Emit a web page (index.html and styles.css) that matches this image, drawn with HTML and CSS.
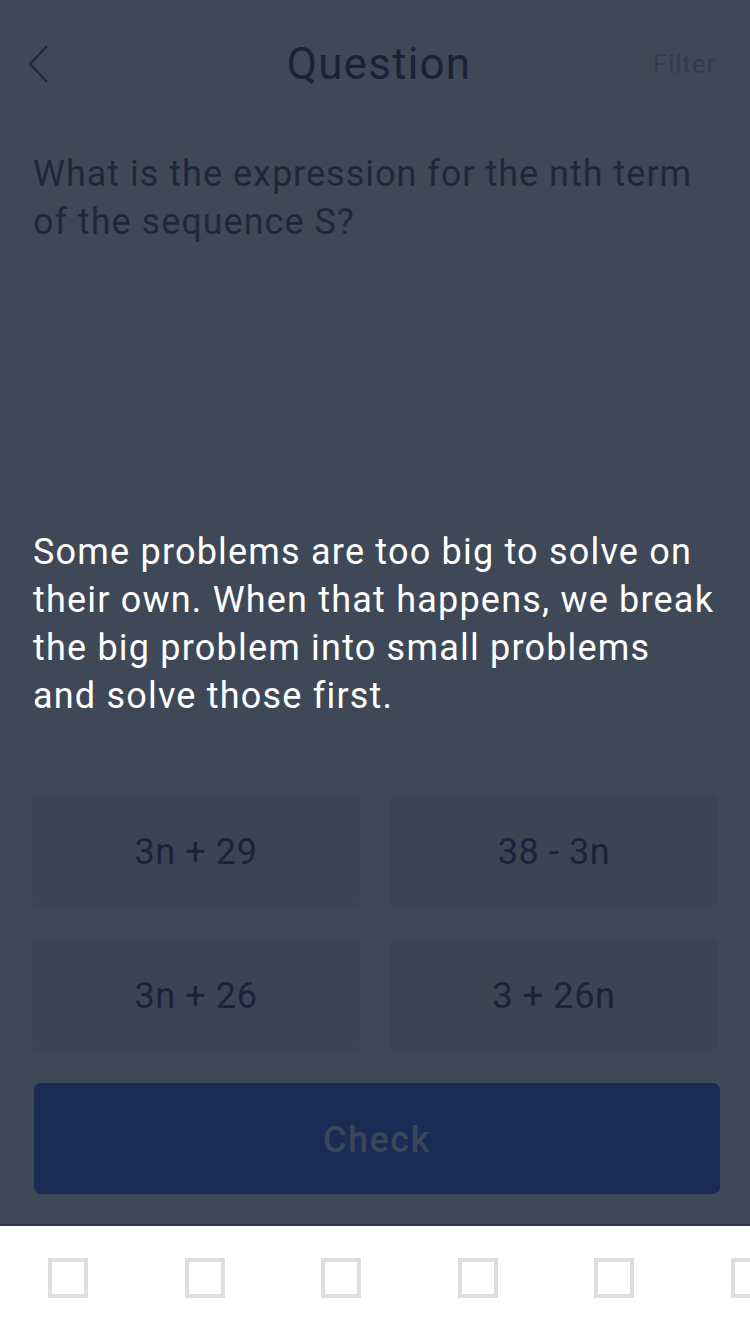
FILE: index.html
```html
<!DOCTYPE html>
<html>
<head>
<meta charset="utf-8">
<link rel="stylesheet" href="styles.css">
</head>
<body>
<div class="screen">
  <div class="main">
    <header class="nav">
      <svg class="back" width="24" height="40" viewBox="0 0 24 40"><path d="M19 2 L2 20 L19 38" fill="none" stroke="#1d2739" stroke-width="2"/></svg>
      <div class="title">Question</div>
      <div class="filter">Filter</div>
    </header>
    <p class="question">What is the expression for the nth term of the sequence S?</p>
    <p class="lead">Some problems are too big to solve on their own. When that happens, we break the big problem into small problems and solve those first.</p>
    <div class="answers">
      <div class="answer">3n + 29</div>
      <div class="answer">38 - 3n</div>
      <div class="answer">3n + 26</div>
      <div class="answer">3 + 26n</div>
    </div>
    <button class="check">Check</button>
  </div>
  <div class="tabbar">
    <span class="tab"></span>
    <span class="tab"></span>
    <span class="tab"></span>
    <span class="tab"></span>
    <span class="tab"></span>
    <span class="tab"></span>
  </div>
</div>
</body>
</html>
```

FILE: styles.css
```css
html, body {
  margin: 0;
  padding: 0;
}
body {
  width: 750px;
  height: 1334px;
  overflow: hidden;
  font-family: Roboto, "Liberation Sans", sans-serif;
}
.screen {
  display: flex;
  flex-direction: column;
  height: 1334px;
}
.main {
  background: #3f4857;
  height: 1224px;
  display: flex;
  flex-direction: column;
  border-bottom: 2px solid #2d3443;
  box-sizing: content-box;
}
.nav {
  height: 128px;
  display: flex;
  align-items: center;
  justify-content: space-between;
  padding: 0 34px 0 28px;
  position: relative;
}
.title {
  position: absolute;
  left: 0;
  right: 0;
  top: 39px;
  text-align: center;
  font-size: 44px;
  letter-spacing: 1.2px;
  color: #1a2335;
  margin-left: 8px;
  line-height: 50px;
}
.filter {
  font-size: 26px;
  letter-spacing: 0.8px;
  color: #333c4c;
  line-height: 30px;
}
.question {
  margin: 22px 32px 0 33px;
  font-size: 36px;
  letter-spacing: 1px;
  line-height: 48px;
  color: #1e283a;
}
.lead {
  margin: 282px 32px 0 33px;
  font-size: 36px;
  letter-spacing: 1.2px;
  line-height: 48px;
  color: #ffffff;
}
.answers {
  margin: 76px 32px 0 32px;
  display: grid;
  grid-template-columns: 328px 328px;
  column-gap: 30px;
  row-gap: 33px;
}
.answer {
  height: 111px;
  background: #3b4453;
  border-radius: 8px;
  display: flex;
  align-items: center;
  justify-content: center;
  font-size: 36px;
  letter-spacing: 0.6px;
  color: #19233a;
}
.check {
  margin: 32px 30px 0 34px;
  height: 111px;
  border: none;
  border-radius: 7px;
  background: #1a2b55;
  color: #3c4659;
  font-family: Roboto, "Liberation Sans", sans-serif;
  font-size: 36px;
  letter-spacing: 1.5px;
  font-weight: 500;
  padding-top: 4px;
}
.tabbar {
  flex: 1;
  background: #ffffff;
  display: flex;
  padding: 32px 0 0 48px;
  gap: 96.6px;
}
.tab {
  flex: none;
  width: 32px;
  height: 32px;
  border: 4px solid #dcdfdf;
}
```
